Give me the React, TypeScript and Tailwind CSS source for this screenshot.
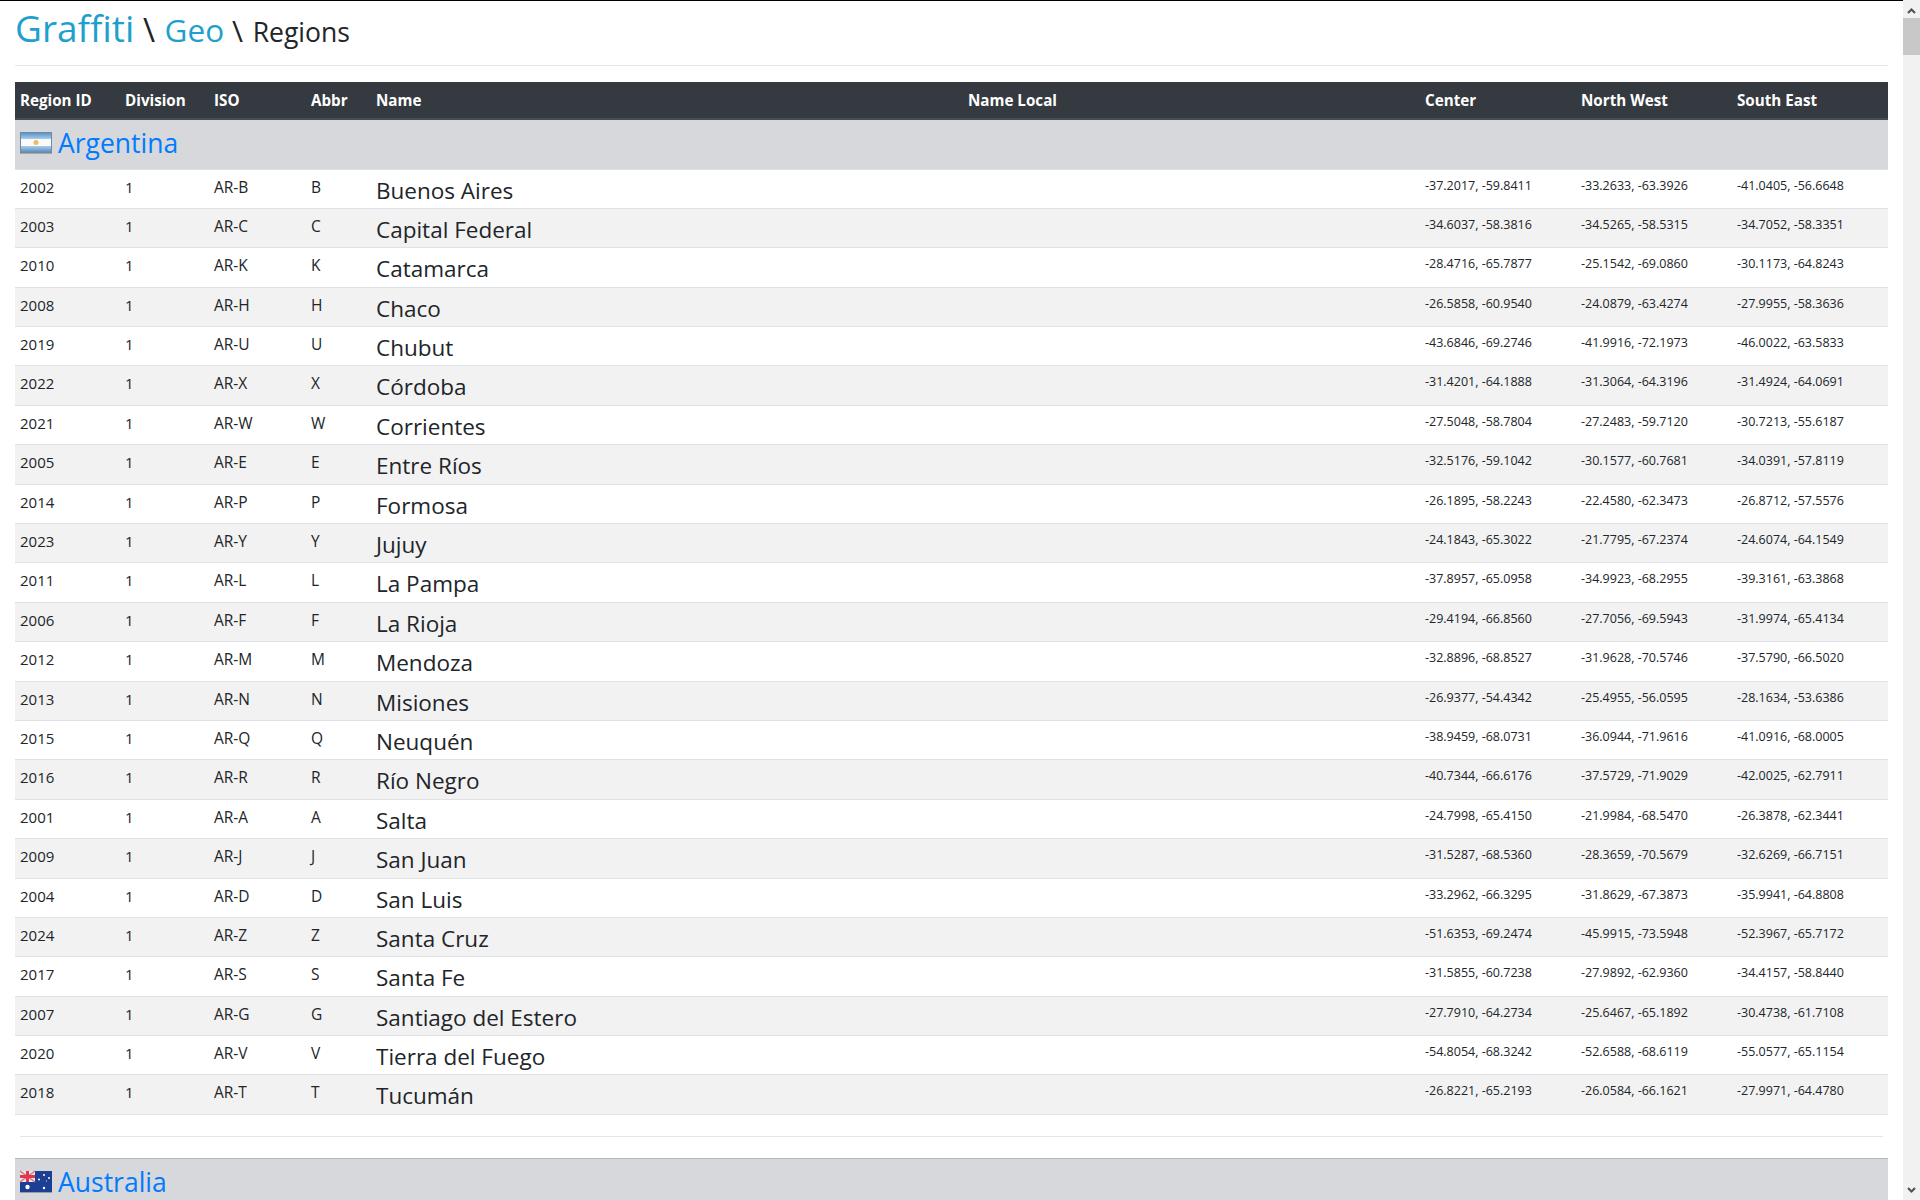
const rows: [string, string, string, string, string, string, string][] = [
  ['2002', 'AR-B', 'B', 'Buenos Aires', '-37.2017, -59.8411', '-33.2633, -63.3926', '-41.0405, -56.6648'],
  ['2003', 'AR-C', 'C', 'Capital Federal', '-34.6037, -58.3816', '-34.5265, -58.5315', '-34.7052, -58.3351'],
  ['2010', 'AR-K', 'K', 'Catamarca', '-28.4716, -65.7877', '-25.1542, -69.0860', '-30.1173, -64.8243'],
  ['2008', 'AR-H', 'H', 'Chaco', '-26.5858, -60.9540', '-24.0879, -63.4274', '-27.9955, -58.3636'],
  ['2019', 'AR-U', 'U', 'Chubut', '-43.6846, -69.2746', '-41.9916, -72.1973', '-46.0022, -63.5833'],
  ['2022', 'AR-X', 'X', 'Córdoba', '-31.4201, -64.1888', '-31.3064, -64.3196', '-31.4924, -64.0691'],
  ['2021', 'AR-W', 'W', 'Corrientes', '-27.5048, -58.7804', '-27.2483, -59.7120', '-30.7213, -55.6187'],
  ['2005', 'AR-E', 'E', 'Entre Ríos', '-32.5176, -59.1042', '-30.1577, -60.7681', '-34.0391, -57.8119'],
  ['2014', 'AR-P', 'P', 'Formosa', '-26.1895, -58.2243', '-22.4580, -62.3473', '-26.8712, -57.5576'],
  ['2023', 'AR-Y', 'Y', 'Jujuy', '-24.1843, -65.3022', '-21.7795, -67.2374', '-24.6074, -64.1549'],
  ['2011', 'AR-L', 'L', 'La Pampa', '-37.8957, -65.0958', '-34.9923, -68.2955', '-39.3161, -63.3868'],
  ['2006', 'AR-F', 'F', 'La Rioja', '-29.4194, -66.8560', '-27.7056, -69.5943', '-31.9974, -65.4134'],
  ['2012', 'AR-M', 'M', 'Mendoza', '-32.8896, -68.8527', '-31.9628, -70.5746', '-37.5790, -66.5020'],
  ['2013', 'AR-N', 'N', 'Misiones', '-26.9377, -54.4342', '-25.4955, -56.0595', '-28.1634, -53.6386'],
  ['2015', 'AR-Q', 'Q', 'Neuquén', '-38.9459, -68.0731', '-36.0944, -71.9616', '-41.0916, -68.0005'],
  ['2016', 'AR-R', 'R', 'Río Negro', '-40.7344, -66.6176', '-37.5729, -71.9029', '-42.0025, -62.7911'],
  ['2001', 'AR-A', 'A', 'Salta', '-24.7998, -65.4150', '-21.9984, -68.5470', '-26.3878, -62.3441'],
  ['2009', 'AR-J', 'J', 'San Juan', '-31.5287, -68.5360', '-28.3659, -70.5679', '-32.6269, -66.7151'],
  ['2004', 'AR-D', 'D', 'San Luis', '-33.2962, -66.3295', '-31.8629, -67.3873', '-35.9941, -64.8808'],
  ['2024', 'AR-Z', 'Z', 'Santa Cruz', '-51.6353, -69.2474', '-45.9915, -73.5948', '-52.3967, -65.7172'],
  ['2017', 'AR-S', 'S', 'Santa Fe', '-31.5855, -60.7238', '-27.9892, -62.9360', '-34.4157, -58.8440'],
  ['2007', 'AR-G', 'G', 'Santiago del Estero', '-27.7910, -64.2734', '-25.6467, -65.1892', '-30.4738, -61.7108'],
  ['2020', 'AR-V', 'V', 'Tierra del Fuego', '-54.8054, -68.3242', '-52.6588, -68.6119', '-55.0577, -65.1154'],
  ['2018', 'AR-T', 'T', 'Tucumán', '-26.8221, -65.2193', '-26.0584, -66.1621', '-27.9971, -64.4780'],
];

const headers = ['Region ID', 'Division', 'ISO', 'Abbr', 'Name', 'Name Local', 'Center', 'North West', 'South East'];

function Cols() {
  return (
    <colgroup>
      <col className="w-[106px]" />
      <col className="w-[89px]" />
      <col className="w-[97px]" />
      <col className="w-[65px]" />
      <col className="w-[592px]" />
      <col className="w-[457px]" />
      <col className="w-[156px]" />
      <col className="w-[156px]" />
      <col className="w-[155px]" />
    </colgroup>
  );
}

function FlagAR() {
  return (
    <svg width="32" height="24" viewBox="0 0 32 24" className="shrink-0">
      <defs>
        <linearGradient id="ar-band" x1="0" y1="0" x2="0" y2="1">
          <stop offset="0" stopColor="#5b93c9" />
          <stop offset="1" stopColor="#a9cdec" />
        </linearGradient>
        <linearGradient id="ar-low" x1="0" y1="0" x2="0" y2="1">
          <stop offset="0" stopColor="#a9cdec" />
          <stop offset="1" stopColor="#5f8fbd" />
        </linearGradient>
      </defs>
      <rect x="0" y="2" width="32" height="21" fill="#a3a5a9" />
      <rect x="0.5" y="1.5" width="31" height="20" fill="#fafafa" stroke="#6f8ba3" />
      <rect x="1" y="2" width="30" height="6" fill="url(#ar-band)" />
      <rect x="1" y="15" width="30" height="6" fill="url(#ar-low)" />
      <circle cx="16" cy="11.5" r="2.5" fill="#eeb96a" />
    </svg>
  );
}

function FlagAU() {
  return (
    <svg width="32" height="24" viewBox="0 0 32 24" className="shrink-0">
      <rect x="0" y="2" width="32" height="21" fill="#9a9ca0" />
      <rect x="0" y="1" width="32" height="21" fill="#1c3f94" />
      <rect x="0" y="1" width="15" height="11" fill="#f3e6e8" />
      <path d="M0 1 L15 12 M15 1 L0 12" stroke="#d9737f" strokeWidth="1.5" />
      <rect x="6" y="1" width="3" height="11" fill="#d8394b" />
      <rect x="0" y="5" width="15" height="3" fill="#d8394b" />
      <circle cx="7.5" cy="17" r="2.2" fill="#fff" />
      <circle cx="24" cy="5" r="1" fill="#fff" />
      <circle cx="19" cy="9.5" r="1" fill="#fff" />
      <circle cx="29" cy="8" r="1" fill="#fff" />
      <circle cx="24" cy="18" r="1.2" fill="#fff" />
      <circle cx="26.5" cy="11" r="0.6" fill="#fff" />
    </svg>
  );
}

function GroupRow({ name, flag, top }: { name: string; flag: React.ReactNode; top?: boolean }) {
  return (
    <tr className={`h-[50px] bg-[#d6d8db] ${top ? 'border-t border-[#b3b7bb]' : ''}`}>
      <td colSpan={9} className="pb-[3px] pl-[5px] pr-1 align-middle">
        <div className="flex items-center gap-[6px]">
          {flag}
          <a href="#" className="text-[26.5px] leading-[38px] text-[#007bff]">{name}</a>
        </div>
      </td>
    </tr>
  );
}

export default function App() {
  return (
    <div className="flex h-[1200px] overflow-hidden bg-white font-['Open_Sans',sans-serif] text-[#212529]">
      <main className="w-[1903px] shrink-0 border-t border-black px-[15px]">
        <header className="flex h-[64px] items-baseline whitespace-pre pt-[2px]">
          <a href="#" className="text-[37px] leading-[50px] text-[#1ea0cd]">Graffiti</a>
          <span className="text-[33px]"> \ </span>
          <a href="#" className="ml-[1px] text-[31.5px] text-[#1ea0cd]">Geo</a>
          <span className="text-[30px]"> \ </span>
          <span className="ml-[2px] text-[26.5px]">Regions</span>
        </header>
        <hr className="border-[#e3e5e8]" />

        <table className="mt-[16px] w-[1873px] table-fixed border-collapse">
          <Cols />
          <thead>
            <tr className="h-[37px] border-b-2 border-[#454d55] bg-[#343a40] text-left text-[15.2px] text-white">
              {headers.map((h, i) => (
                <th key={h} className={`pt-px pr-1 font-bold ${i === 0 ? 'pl-[5px]' : 'pl-1'}`}>{h}</th>
              ))}
            </tr>
          </thead>
          <tbody>
            <GroupRow name="Argentina" flag={<FlagAR />} />
            {rows.map((r, i) => (
              <tr key={r[0]} className={`h-[39.4px] border-t border-b border-[#dee2e6] ${i % 2 ? 'bg-[#f2f2f2]' : 'bg-white'}`}>
                <td className="pl-[5px] pr-1 align-top text-[15px] leading-[35px]">{r[0]}</td>
                <td className="px-1 align-top text-[15px] leading-[35px]">1</td>
                <td className="px-1 align-top text-[15.5px] leading-[35px]">{r[1]}</td>
                <td className="px-1 align-top text-[15.5px] leading-[35px]">{r[2]}</td>
                <td className="px-1 align-top text-[22.5px]">
                  <div className="h-[37px] leading-[41px]">{r[3]}</div>
                </td>
                <td className="px-1" />
                <td className="px-1 align-top text-[12.5px] leading-[31px]">{r[4]}</td>
                <td className="px-1 align-top text-[12.5px] leading-[31px]">{r[5]}</td>
                <td className="px-1 align-top text-[12.5px] leading-[31px]">{r[6]}</td>
              </tr>
            ))}
          </tbody>
        </table>

        <hr className="mx-[5px] mt-[21px] border-[#e3e5e8]" />

        <table className="mt-[21px] w-[1873px] table-fixed border-collapse">
          <Cols />
          <tbody>
            <GroupRow name="Australia" flag={<FlagAU />} top />
          </tbody>
        </table>
      </main>

      <aside className="flex h-[1200px] w-[17px] shrink-0 flex-col bg-[#f1f1f1]">
        <div className="flex h-[18px] items-center justify-center pt-[3px]">
          <svg width="9" height="6" viewBox="0 0 9 6"><path d="M1 5 L4.5 1.5 L8 5" fill="none" stroke="#505050" strokeWidth="2" /></svg>
        </div>
        <div className="h-[37px] bg-[#c8c8c8]" />
        <div className="flex-1" />
        <div className="flex h-[18px] items-center justify-center pb-[3px]">
          <svg width="9" height="6" viewBox="0 0 9 6"><path d="M1 1 L4.5 4.5 L8 1" fill="none" stroke="#505050" strokeWidth="2" /></svg>
        </div>
      </aside>
    </div>
  );
}
